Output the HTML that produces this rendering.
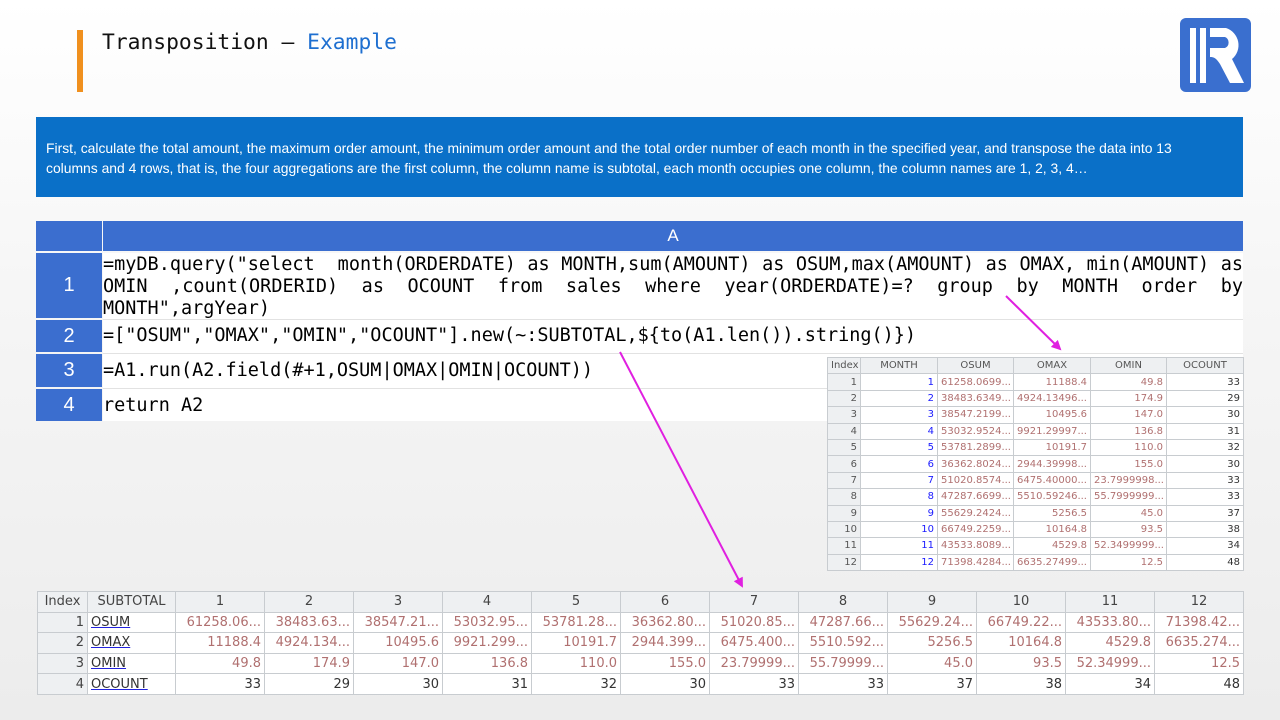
<!DOCTYPE html>
<html><head><meta charset="utf-8"><style>
*{margin:0;padding:0;box-sizing:border-box}
body{width:1280px;height:720px;overflow:hidden;background:linear-gradient(#fff 0%,#f6f6f6 40%,#ececec 100%);font-family:"Liberation Sans",sans-serif;position:relative}
.abs{position:absolute}
.title{left:102px;top:30px;font-family:"DejaVu Sans Mono","Liberation Mono",monospace;font-size:21.3px;color:#111}
.banner{left:36px;top:117px;width:1207px;height:80px;background:#0a70c8;color:#fff;font-size:13.9px;line-height:20px;padding:21px 20px 21px 10px}
.code{font-family:"DejaVu Sans Mono","Liberation Mono",monospace;font-size:18.5px;color:#000;line-height:22px}
.rh{background:#3b6ecf;color:#fff;font-size:20px;text-align:center;font-family:"Liberation Sans",sans-serif}
table{border-collapse:collapse;font-family:"DejaVu Sans",sans-serif;background:#fff}
td{border:1px solid #c8ccd0;white-space:nowrap;overflow:hidden;padding:0 3px}
.t1 td{font-size:10px;height:16.4px;color:#b07070;text-align:right}
.t1 tr:first-child td{background:#eef0f2;color:#555;text-align:center}
.t1 td:first-child{background:#eef0f2;color:#555;text-align:right}
.t1 td.b{color:#1a1aff}
.t1 td.k{color:#333}
.t2 td{font-size:13px;height:20.6px;color:#b07070;text-align:right}
.t2 tr:first-child td{background:#eef0f2;color:#444;text-align:center}
.t2 td:first-child{background:#eef0f2;color:#444;text-align:right}
.t2 td.n{color:#333;text-align:left;text-decoration:underline;text-decoration-color:#2222dd}
.t2 td.k{color:#333}
</style></head><body>
<div class="abs" style="left:77px;top:30px;width:6px;height:62px;background:#f0901e"></div>
<div class="abs title">Transposition — <span style="color:#1e6fd0">Example</span></div>
<svg class="abs" style="left:1180px;top:18px" width="71" height="74" viewBox="0 0 71 74">
<rect width="71" height="74" rx="6" fill="#3a6fcf"/>
<rect x="10" y="10" width="6" height="55" fill="#fff"/>
<rect x="20" y="10" width="6" height="55" fill="#fff"/>
<path d="M30 10 H46 A18 18 0 0 1 52 41 L64 65 H50 L40 46 C36 40 34 39 30 39 V30 H45 A6 6 0 0 0 45 19 H30Z" fill="#fff"/>
</svg>
<div class="abs banner">First, calculate the total amount, the maximum order amount, the minimum order amount and the total order number of each month in the specified year, and transpose the data into 13 columns and 4 rows, that is, the four aggregations are the first column, the column name is subtotal, each month occupies one column, the column names are 1, 2, 3, 4…</div>

<div class="abs rh" style="left:36px;top:221px;width:66px;height:30px"></div>
<div class="abs rh" style="left:103px;top:221px;width:1140px;height:30px;line-height:30px;font-size:17px">A</div>
<div class="abs rh" style="left:36px;top:253px;width:66px;height:65px;line-height:65px">1</div>
<div class="abs rh" style="left:36px;top:320px;width:66px;height:32px;line-height:32px">2</div>
<div class="abs rh" style="left:36px;top:354px;width:66px;height:33px;line-height:33px">3</div>
<div class="abs rh" style="left:36px;top:389px;width:66px;height:32px;line-height:32px">4</div>
<div class="abs" style="left:103px;top:253px;width:1140px;height:168px;background:#fff"></div>
<div class="abs" style="left:103px;top:319px;width:1140px;height:1px;background:#e2e2e2"></div>
<div class="abs" style="left:103px;top:353px;width:1140px;height:1px;background:#e2e2e2"></div>
<div class="abs" style="left:103px;top:388px;width:1140px;height:1px;background:#e2e2e2"></div>
<div class="abs code" style="left:103px;top:254px;width:1140px;text-align:justify;text-align-last:left">=myDB.query("select&nbsp; month(ORDERDATE) as MONTH,sum(AMOUNT) as OSUM,max(AMOUNT) as OMAX, min(AMOUNT) as OMIN ,count(ORDERID) as OCOUNT from sales where year(ORDERDATE)=? group by MONTH order by MONTH",argYear)</div>
<div class="abs code" style="left:103px;top:325px">=["OSUM","OMAX","OMIN","OCOUNT"].new(~:SUBTOTAL,${to(A1.len()).string()})</div>
<div class="abs code" style="left:103px;top:360px">=A1.run(A2.field(#+1,OSUM|OMAX|OMIN|OCOUNT))</div>
<div class="abs code" style="left:103px;top:395px">return A2</div>

<table class="abs t1" style="left:827px;top:357px;width:416px;table-layout:fixed">
<colgroup><col style="width:33px"><col style="width:77px"><col style="width:76px"><col style="width:77px"><col style="width:76px"><col style="width:77px"></colgroup>
<tr><td>Index</td><td>MONTH</td><td>OSUM</td><td>OMAX</td><td>OMIN</td><td>OCOUNT</td></tr>
<tr><td>1</td><td class="b">1</td><td style="text-align:left">61258.0699...</td><td>11188.4</td><td>49.8</td><td class="k">33</td></tr>
<tr><td>2</td><td class="b">2</td><td style="text-align:left">38483.6349...</td><td style="text-align:left">4924.13496...</td><td>174.9</td><td class="k">29</td></tr>
<tr><td>3</td><td class="b">3</td><td style="text-align:left">38547.2199...</td><td>10495.6</td><td>147.0</td><td class="k">30</td></tr>
<tr><td>4</td><td class="b">4</td><td style="text-align:left">53032.9524...</td><td style="text-align:left">9921.29997...</td><td>136.8</td><td class="k">31</td></tr>
<tr><td>5</td><td class="b">5</td><td style="text-align:left">53781.2899...</td><td>10191.7</td><td>110.0</td><td class="k">32</td></tr>
<tr><td>6</td><td class="b">6</td><td style="text-align:left">36362.8024...</td><td style="text-align:left">2944.39998...</td><td>155.0</td><td class="k">30</td></tr>
<tr><td>7</td><td class="b">7</td><td style="text-align:left">51020.8574...</td><td style="text-align:left">6475.40000...</td><td style="text-align:left">23.7999998...</td><td class="k">33</td></tr>
<tr><td>8</td><td class="b">8</td><td style="text-align:left">47287.6699...</td><td style="text-align:left">5510.59246...</td><td style="text-align:left">55.7999999...</td><td class="k">33</td></tr>
<tr><td>9</td><td class="b">9</td><td style="text-align:left">55629.2424...</td><td>5256.5</td><td>45.0</td><td class="k">37</td></tr>
<tr><td>10</td><td class="b">10</td><td style="text-align:left">66749.2259...</td><td>10164.8</td><td>93.5</td><td class="k">38</td></tr>
<tr><td>11</td><td class="b">11</td><td style="text-align:left">43533.8089...</td><td>4529.8</td><td style="text-align:left">52.3499999...</td><td class="k">34</td></tr>
<tr><td>12</td><td class="b">12</td><td style="text-align:left">71398.4284...</td><td style="text-align:left">6635.27499...</td><td>12.5</td><td class="k">48</td></tr>
</table>

<table class="abs t2" style="left:37px;top:591px;width:1206px;table-layout:fixed">
<colgroup><col style="width:50px"><col style="width:88px"><col span="12" style="width:89px"></colgroup>
<tr><td>Index</td><td>SUBTOTAL</td><td>1</td><td>2</td><td>3</td><td>4</td><td>5</td><td>6</td><td>7</td><td>8</td><td>9</td><td>10</td><td>11</td><td>12</td></tr>
<tr><td>1</td><td class="n">OSUM</td><td>61258.06...</td><td>38483.63...</td><td>38547.21...</td><td>53032.95...</td><td>53781.28...</td><td>36362.80...</td><td>51020.85...</td><td>47287.66...</td><td>55629.24...</td><td>66749.22...</td><td>43533.80...</td><td>71398.42...</td></tr>
<tr><td>2</td><td class="n">OMAX</td><td>11188.4</td><td>4924.134...</td><td>10495.6</td><td>9921.299...</td><td>10191.7</td><td>2944.399...</td><td>6475.400...</td><td>5510.592...</td><td>5256.5</td><td>10164.8</td><td>4529.8</td><td>6635.274...</td></tr>
<tr><td>3</td><td class="n">OMIN</td><td>49.8</td><td>174.9</td><td>147.0</td><td>136.8</td><td>110.0</td><td>155.0</td><td>23.79999...</td><td>55.79999...</td><td>45.0</td><td>93.5</td><td>52.34999...</td><td>12.5</td></tr>
<tr><td>4</td><td class="n">OCOUNT</td><td class="k">33</td><td class="k">29</td><td class="k">30</td><td class="k">31</td><td class="k">32</td><td class="k">30</td><td class="k">33</td><td class="k">33</td><td class="k">37</td><td class="k">38</td><td class="k">34</td><td class="k">48</td></tr>
</table>

<svg class="abs" style="left:0;top:0" width="1280" height="720">
<defs><marker id="m" markerWidth="10" markerHeight="10" refX="8" refY="5" orient="auto" markerUnits="userSpaceOnUse"><path d="M0 0 L10 5 L0 10Z" fill="#e020e0"/></marker></defs>
<line x1="1006" y1="296" x2="1060" y2="349" stroke="#e020e0" stroke-width="2" marker-end="url(#m)"/>
<line x1="620" y1="352" x2="742" y2="586" stroke="#e020e0" stroke-width="2" marker-end="url(#m)"/>
</svg>
</body></html>
